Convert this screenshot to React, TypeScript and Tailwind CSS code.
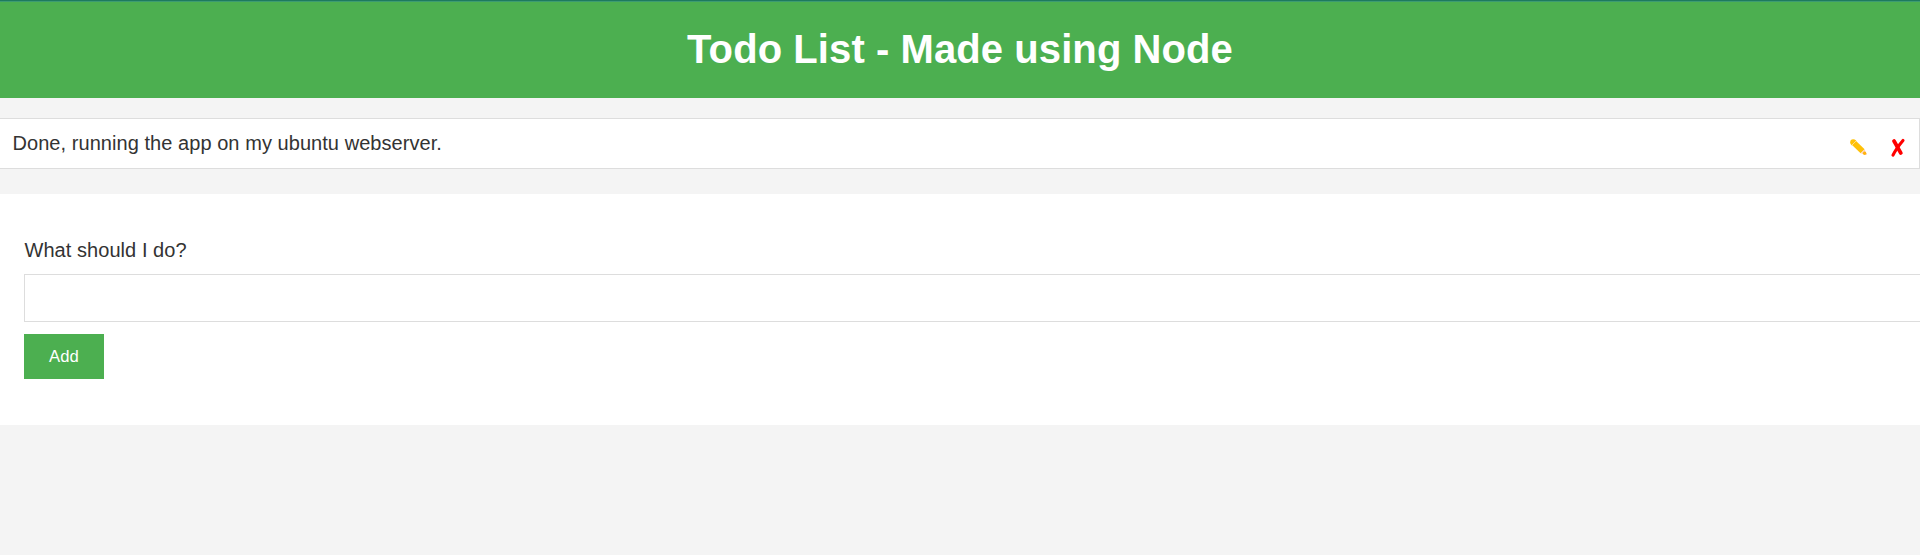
function PencilIcon() {
  return (
    <svg width="18" height="18" viewBox="0 0 18 18" aria-hidden="true">
      <path d="M0.8 4.8 4.8 0.8 14.6 10.2 10.6 14.2Z" fill="#ffc107" />
      <circle cx="3.2" cy="3.3" r="3" fill="#ffc107" />
      <path d="M1.6 6.4 6.2 1.8" stroke="#ffdf9a" strokeWidth="0.9" />
      <path d="M10.6 14.2 14.6 10.2 17 16Z" fill="#fbd0c0" />
      <circle cx="14.6" cy="14.2" r="1.7" fill="#ffb30f" />
    </svg>
  );
}

function CrossIcon() {
  return (
    <svg width="16" height="20" viewBox="0 0 16 20" aria-hidden="true">
      <path d="M4 3C6.2 6.5 8.3 11 10.8 15" fill="none" stroke="#f00" strokeWidth="3.8" strokeLinecap="round" />
      <path d="M13 2.4C9.5 6.5 5.4 12 3 17.2" fill="none" stroke="#f00" strokeWidth="3.1" strokeLinecap="round" />
    </svg>
  );
}

export default function App() {
  return (
    <div className="min-h-screen overflow-hidden bg-[#f4f4f4] font-['Liberation_Sans',Arial,sans-serif] text-[#333]">
      <header className="flex h-[98px] flex-col bg-[#4caf50]">
        <div className="h-px bg-[#1d7a5f]" />
        <div className="h-px bg-[#3c9b72]" />
        <h1 className="pt-[24px] text-center text-[40px] leading-[46px] font-bold tracking-[0.08px] text-white">
          Todo List - Made using Node
        </h1>
      </header>
      <ul className="mt-5">
        <li className="flex h-[51px] justify-between border-y border-r border-[#ddd] bg-white pl-[12.5px]">
          <span className="pt-[13px] text-[20px] leading-[23px] tracking-[0.055px]">Done, running the app on my ubuntu webserver.</span>
          <span className="flex items-start gap-[22px] pt-[19px] pr-[13px]">
            <button type="button" aria-label="Edit" className="pt-px"><PencilIcon /></button>
            <button type="button" aria-label="Delete"><CrossIcon /></button>
          </span>
        </li>
      </ul>
      <form className="mt-[25px] h-[231px] bg-white pt-[45px] pl-6">
        <label htmlFor="task" className="block pl-[0.5px] text-[20px] leading-[23px] tracking-[0.055px]">What should I do?</label>
        <input id="task" type="text" className="mt-3 block h-12 w-[1920px] border border-[#ddd] bg-white px-3 outline-none" />
        <button type="button" className="mt-3 block h-[45px] w-20 bg-[#4caf50] text-[16.67px] leading-[19px] tracking-[0.1px] text-white">
          Add
        </button>
      </form>
    </div>
  );
}
